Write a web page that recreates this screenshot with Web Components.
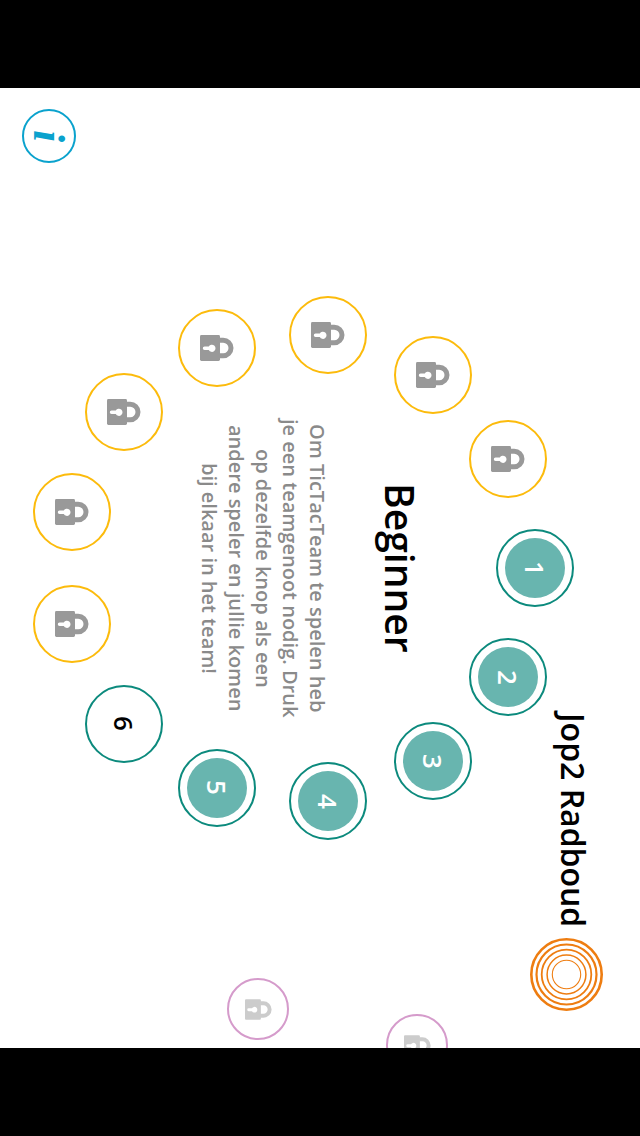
<!DOCTYPE html>
<html lang="nl">
<head>
<meta charset="utf-8">
<meta name="viewport" content="width=device-width, initial-scale=1">
<title>TicTacTeam</title>
<style>
  body { margin: 0; background: #000; font-family: "Open Sans", "Noto Sans", sans-serif; }
</style>
</head>
<body>
<game-board>
  <info-button slot="info">i</info-button>
  <level-ring slot="ring">
    <level-node state="done">1</level-node>
    <level-node state="done">2</level-node>
    <level-node state="done">3</level-node>
    <level-node state="done">4</level-node>
    <level-node state="done">5</level-node>
    <level-node state="open">6</level-node>
    <level-node state="locked"></level-node>
    <level-node state="locked"></level-node>
    <level-node state="locked"></level-node>
    <level-node state="locked"></level-node>
    <level-node state="locked"></level-node>
    <level-node state="locked"></level-node>
    <level-node state="locked"></level-node>
  </level-ring>
  <level-intro slot="intro">
    <span slot="title">Beginner</span>
    Om TicTacTeam te spelen heb<br>je een teamgenoot nodig. Druk<br>op dezelfde knop als een<br>andere speler en jullie komen<br>bij elkaar in het team!
  </level-intro>
  <level-node slot="next" state="future" style="--x: -62px; --y: 441px"></level-node>
  <level-node slot="next" state="future" style="--x: 97px; --y: 477px"></level-node>
  <player-tag slot="player">Jop2 Radboud</player-tag>
</game-board>

<script>
const define = (name, html, setup) => customElements.define(name, class extends HTMLElement {
  constructor() {
    super();
    this.attachShadow({ mode: 'open' }).innerHTML = html;
  }
  connectedCallback() { if (setup) setup(this); }
});

/* The board is turned a quarter: its lines of text run from top to bottom. */
define('game-board', `
  <style>
    :host { display: grid; grid-template-rows: 88px 1fr 88px; min-height: 100vh; background: #000; }
    main { grid-row: 2; position: relative; display: grid; overflow: hidden; background: #fff; }
    slot::slotted(*) { grid-area: 1 / 1; }
    slot[name=info]::slotted(*) { place-self: start; margin: 21px 22px; }
    slot[name=ring]::slotted(*) { place-self: stretch; }
    slot[name=intro]::slotted(*) { place-self: center; margin-right: 16px; }
    slot[name=player]::slotted(*) { place-self: end; margin: 37px; }
    slot[name=next]::slotted(*) { position: absolute; left: calc(50% + var(--x)); top: calc(50% + var(--y)); translate: -50% -50%; }
  </style>
  <main>
    <slot name="ring"></slot>
    <slot name="intro"></slot>
    <slot name="info"></slot>
    <slot name="next"></slot>
    <slot name="player"></slot>
  </main>`);

define('info-button', `
  <style>
    :host { display: block; }
    button { display: grid; place-items: center; box-sizing: border-box; width: 54px; height: 54px; padding: 0;
      border: 2px solid #0aa2cd; border-radius: 50%; background: #fff; color: #0aa2cd;
      font: italic bold 44px/52px "Liberation Serif", serif; writing-mode: vertical-rl; }
  </style>
  <button type="button" aria-label="Informatie"><slot></slot></button>`);

define('level-ring', `
  <style>
    :host { display: block; position: relative; }
    ::slotted(*) { --angle: calc(var(--index) * 360deg / 13); position: absolute; translate: -50% -50%;
      left: calc(50% - 20px + 235px * cos(var(--angle)));
      top: calc(50% + 235px * sin(var(--angle))); }
  </style>
  <slot></slot>`,
  host => [...host.querySelectorAll('level-node')].forEach((node, i) => node.style.setProperty('--index', i)));

define('level-node', `
  <style>
    :host { display: block; }
    button { display: grid; place-items: center; box-sizing: border-box; width: 78px; height: 78px; padding: 0;
      border: 2px solid #0c8a7d; border-radius: 50%; background: #fff; color: #000;
      font: 600 26px/60px "Open Sans", "Noto Sans", sans-serif; }
    span { display: block; width: 60px; height: 60px; border-radius: 50%; writing-mode: vertical-rl; text-align: center; }
    svg { display: none; width: 34px; height: 26px; color: #999; }
    :host([state=done]) span { background: #68b5af; color: #fff; }
    :host([state=locked]) button { border-color: #fcbb0c; }
    :host([state=locked]) span, :host([state=future]) span { display: none; }
    :host([state=locked]) svg, :host([state=future]) svg { display: block; }
    :host([state=future]) button { width: 62px; height: 62px; border-color: #d59bcb; }
    :host([state=future]) svg { width: 27px; height: 21px; color: #ccc; }
  </style>
  <button type="button">
    <span><slot></slot></span>
    <svg viewBox="0 0 34 26" aria-hidden="true">
      <path d="M19 5.2h4.2a7.8 7.8 0 0 1 0 15.6H19" fill="none" stroke="currentColor" stroke-width="5"/>
      <rect width="20" height="26" rx="1.4" fill="currentColor"/>
      <path d="M4.6 11.5h4.2a3.6 3.6 0 1 1 0 3.6H4.6a1.8 1.8 0 0 1 0-3.6z" fill="#fff"/>
    </svg>
  </button>`,
  host => {
    const state = host.getAttribute('state');
    const locked = state === 'locked' || state === 'future';
    const button = host.shadowRoot.querySelector('button');
    button.disabled = locked;
    if (locked) button.setAttribute('aria-label', 'Vergrendeld');
  });

define('level-intro', `
  <style>
    :host { display: block; writing-mode: vertical-rl; text-align: center; }
    h1 { margin: 0 0 0 41px; font-size: 39px; line-height: 56px; font-weight: 600; color: #000; }
    p { margin: 0; font-size: 20px; line-height: 27px; font-weight: 600; color: #8a8a8a; }
  </style>
  <h1><slot name="title"></slot></h1>
  <p><slot></slot></p>`);

define('player-tag', `
  <style>
    :host { display: flex; align-items: center; gap: 11px; writing-mode: vertical-rl;
      font-size: 32px; line-height: 44px; font-weight: 600; color: #000; }
    span { padding-left: 12px; }
    svg { display: block; width: 73px; height: 73px; }
  </style>
  <span><slot></slot></span>
  <svg viewBox="0 0 73 73" fill="none" stroke="#ee7d11" aria-hidden="true">
    <circle cx="36.5" cy="36.5" r="35.2" stroke-width="2.6"/>
    <circle cx="36.5" cy="36.5" r="30" stroke-width="2.2"/>
    <circle cx="36.5" cy="36.5" r="24.8" stroke-width="1.8"/>
    <circle cx="36.5" cy="36.5" r="19.4" stroke-width="1.5"/>
    <circle cx="36.5" cy="36.5" r="14.2" stroke-width="1.1"/>
  </svg>`);
</script>
</body>
</html>
